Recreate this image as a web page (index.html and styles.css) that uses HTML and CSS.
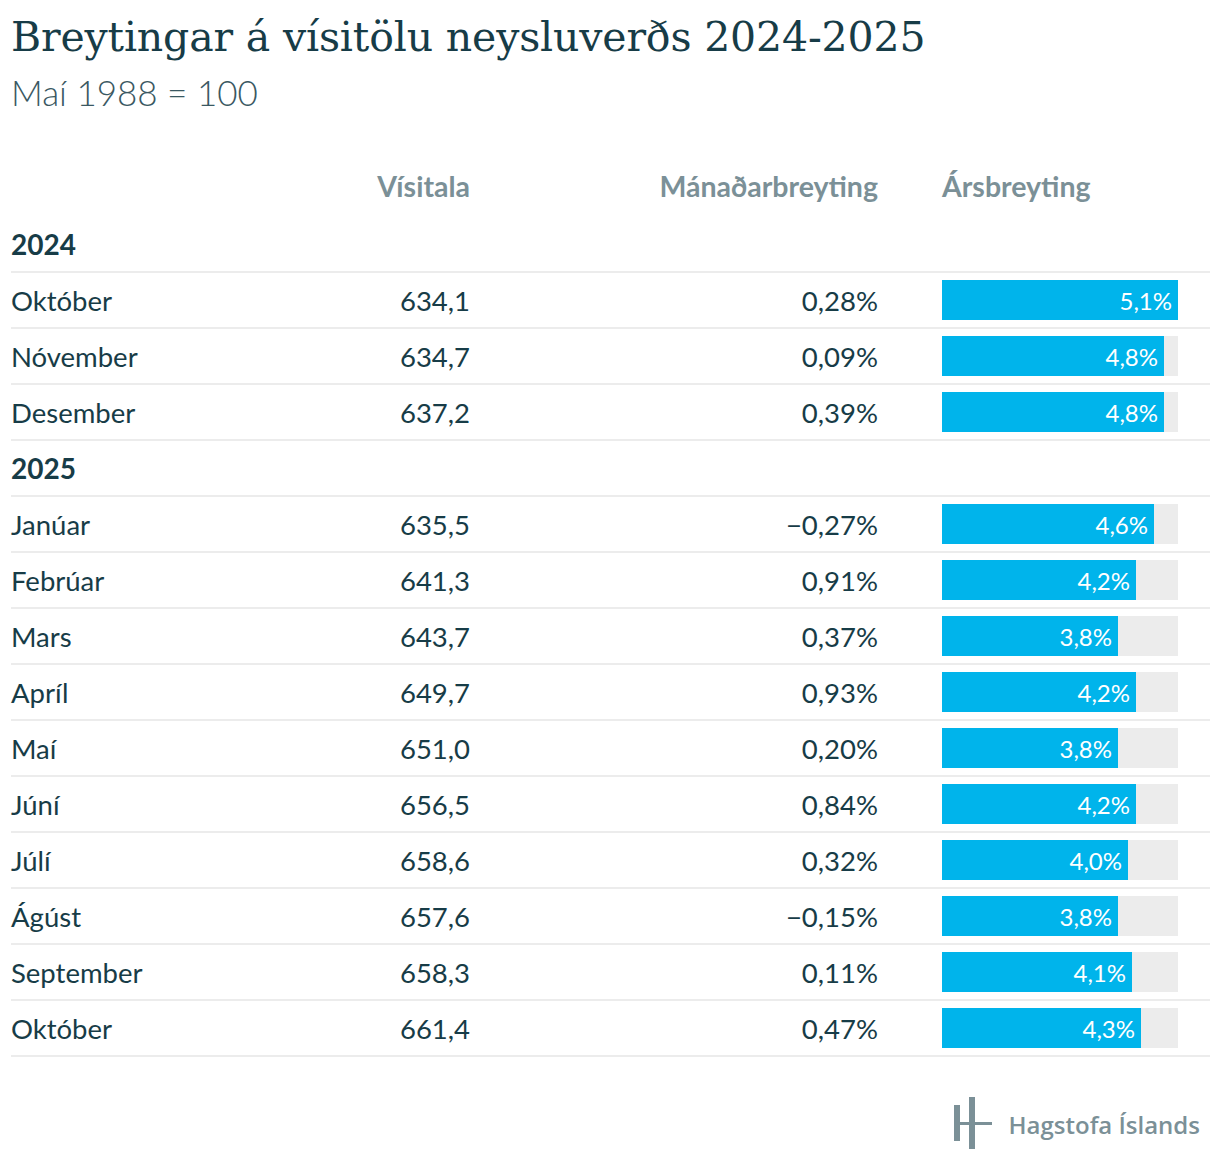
FILE: index.html
```html
<!DOCTYPE html>
<html lang="is">
<head>
<meta charset="utf-8">
<title>Breytingar á vísitölu neysluverðs 2024-2025</title>
<link rel="stylesheet" href="styles.css">
</head>
<body>
<div class="page">
  <header class="head">
    <h1 class="title">Breytingar á vísitölu neysluverðs 2024-2025</h1>
    <p class="subtitle">Maí 1988 = 100</p>
  </header>
  <div class="table">
    <div class="row hrow">
      <div class="c1"></div>
      <div class="c2">Vísitala</div>
      <div class="c3">Mánaðarbreyting</div>
      <div class="c4 left">Ársbreyting</div>
    </div>
    <div class="row year"><div class="c1">2024</div></div>
    <div class="row"><div class="c1">Október</div><div class="c2">634,1</div><div class="c3">0,28%</div><div class="c4"><div class="track"><div class="bar" style="width:236px"><span>5,1%</span></div></div></div></div>
    <div class="row"><div class="c1">Nóvember</div><div class="c2">634,7</div><div class="c3">0,09%</div><div class="c4"><div class="track"><div class="bar" style="width:222px"><span>4,8%</span></div></div></div></div>
    <div class="row"><div class="c1">Desember</div><div class="c2">637,2</div><div class="c3">0,39%</div><div class="c4"><div class="track"><div class="bar" style="width:222px"><span>4,8%</span></div></div></div></div>
    <div class="row year"><div class="c1">2025</div></div>
    <div class="row"><div class="c1">Janúar</div><div class="c2">635,5</div><div class="c3">−0,27%</div><div class="c4"><div class="track"><div class="bar" style="width:212px"><span>4,6%</span></div></div></div></div>
    <div class="row"><div class="c1">Febrúar</div><div class="c2">641,3</div><div class="c3">0,91%</div><div class="c4"><div class="track"><div class="bar" style="width:194px"><span>4,2%</span></div></div></div></div>
    <div class="row"><div class="c1">Mars</div><div class="c2">643,7</div><div class="c3">0,37%</div><div class="c4"><div class="track"><div class="bar" style="width:176px"><span>3,8%</span></div></div></div></div>
    <div class="row"><div class="c1">Apríl</div><div class="c2">649,7</div><div class="c3">0,93%</div><div class="c4"><div class="track"><div class="bar" style="width:194px"><span>4,2%</span></div></div></div></div>
    <div class="row"><div class="c1">Maí</div><div class="c2">651,0</div><div class="c3">0,20%</div><div class="c4"><div class="track"><div class="bar" style="width:176px"><span>3,8%</span></div></div></div></div>
    <div class="row"><div class="c1">Júní</div><div class="c2">656,5</div><div class="c3">0,84%</div><div class="c4"><div class="track"><div class="bar" style="width:194px"><span>4,2%</span></div></div></div></div>
    <div class="row"><div class="c1">Júlí</div><div class="c2">658,6</div><div class="c3">0,32%</div><div class="c4"><div class="track"><div class="bar" style="width:186px"><span>4,0%</span></div></div></div></div>
    <div class="row"><div class="c1">Ágúst</div><div class="c2">657,6</div><div class="c3">−0,15%</div><div class="c4"><div class="track"><div class="bar" style="width:176px"><span>3,8%</span></div></div></div></div>
    <div class="row"><div class="c1">September</div><div class="c2">658,3</div><div class="c3">0,11%</div><div class="c4"><div class="track"><div class="bar" style="width:190px"><span>4,1%</span></div></div></div></div>
    <div class="row"><div class="c1">Október</div><div class="c2">661,4</div><div class="c3">0,47%</div><div class="c4"><div class="track"><div class="bar" style="width:199px"><span>4,3%</span></div></div></div></div>
  </div>
  <footer class="foot">
    <svg class="logo" width="40" height="54" viewBox="0 0 40 54" aria-hidden="true">
      <rect x="2" y="8" width="6" height="36" fill="#7b9097"/>
      <rect x="17" y="0" width="6" height="52" fill="#7b9097"/>
      <rect x="2" y="25" width="38" height="3" fill="#7b9097"/>
    </svg>
    <span class="brand">Hagstofa Íslands</span>
  </footer>
</div>
</body>
</html>
```

FILE: styles.css
```css
html, body {
  margin: 0;
  padding: 0;
  background: #ffffff;
}
.page {
  width: 1199px;
  padding: 0 10px 0 11px;
  font-family: Lato, "Open Sans", sans-serif;
  color: #173c47;
}
.head {
  height: 161px;
}
.title {
  margin: 0;
  padding-top: 11px;
  font-family: "DejaVu Serif", "Liberation Serif", serif;
  font-weight: normal;
  font-size: 41px;
  line-height: 52px;
  color: #173c47;
  letter-spacing: -0.15px;
}
.subtitle {
  margin: 0;
  padding-top: 9px;
  font-size: 35px;
  font-weight: 300;
  line-height: 40px;
  color: #3a5862;
}
.table {
  display: flex;
  flex-direction: column;
}
.row {
  display: grid;
  grid-template-columns: 259px 200px 408px 64px 236px 32px;
  grid-template-areas: "a b c . d .";
  align-items: center;
  height: 54px;
  border-bottom: 2px solid #ececec;
  font-size: 27.5px;
}
.hrow {
  border-bottom: none;
  height: 50px;
  font-size: 28.5px;
  font-weight: bold;
  color: #7b9097;
  padding-bottom: 6px;
}
.year {
  font-size: 28px;
  font-weight: bold;
}
.c1 { grid-area: a; }
.c2 { grid-area: b; text-align: right; }
.c3 { grid-area: c; text-align: right; }
.c4 { grid-area: d; }
.left { text-align: left; }
.track {
  width: 236px;
  height: 40px;
  background: #ececec;
}
.bar {
  height: 40px;
  background: #00b4eb;
  display: flex;
  align-items: center;
  justify-content: flex-end;
  box-sizing: border-box;
  padding-right: 6px;
}
.bar span {
  color: #ffffff;
  font-size: 24px;
}
.foot {
  display: flex;
  justify-content: flex-end;
  align-items: center;
  gap: 17px;
  margin-top: 40px;
  padding-right: 10px;
}
.brand {
  font-family: "Open Sans", Lato, sans-serif;
  font-weight: 600;
  font-size: 24px;
  color: #7b9097;
}
```
